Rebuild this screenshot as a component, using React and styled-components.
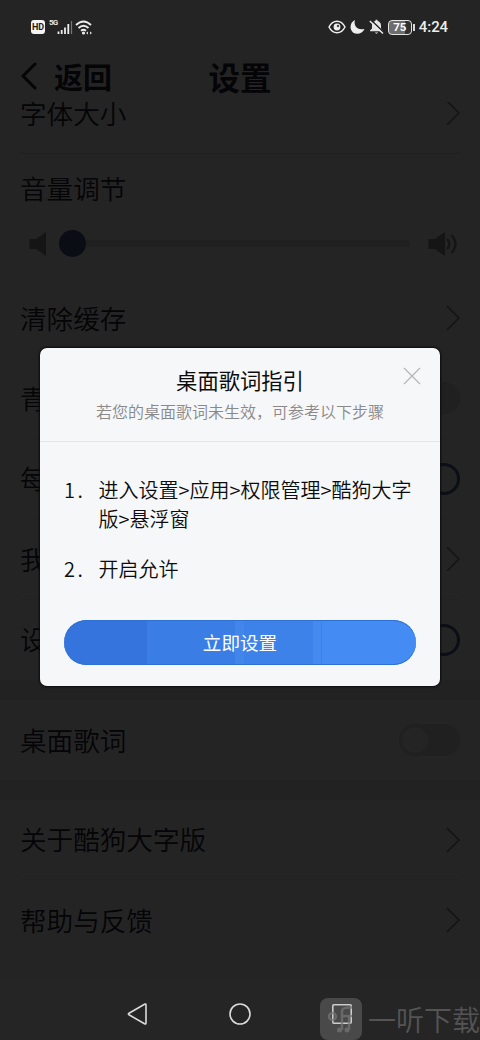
import styled, { createGlobalStyle } from 'styled-components';

const GlobalStyle = createGlobalStyle`
  * {
    box-sizing: border-box;
  }

  body {
    margin: 0;
    background: #242424;
    font-family: "Noto Sans CJK SC", sans-serif;
    font-weight: 350;
  }
`;

const Screen = styled.div`
  position: relative;
  display: flex;
  flex-direction: column;
  width: 480px;
  height: 1040px;
  overflow: hidden;
  background: #242424;
  color: #050507;
`;

const StatusBar = styled.div`
  display: flex;
  align-items: center;
  flex: none;
  height: 54px;
  padding: 0 32px 0 31px;
`;

const StatusGroup = styled.div`
  display: flex;
  align-items: center;
  margin-left: ${({ $end }) => ($end ? 'auto' : 0)};
`;

const HdBadge = styled.span`
  width: 14px;
  height: 14px;
  border-radius: 3px;
  background: #f4f4f4;
  color: #1c1c1c;
  font: bold 9px/14px Roboto, sans-serif;
  text-align: center;
`;

const Network = styled.span`
  align-self: flex-start;
  margin: -1px 0 0 4px;
  color: #e8e8e8;
  font: bold 8px/8px Roboto, sans-serif;
  letter-spacing: -0.8px;
`;

const Battery = styled.span`
  width: 24px;
  height: 15px;
  margin-left: 4px;
  border: 1.5px solid #e4e4e4;
  border-radius: 4px;
  background: linear-gradient(90deg, #6d6d6d 72%, #303030 72%);
  color: #fff;
  font: bold 11.5px/13px Roboto, sans-serif;
  text-align: center;
`;

const BatteryTip = styled.span`
  width: 2px;
  height: 7px;
  margin-left: 1px;
  background: #d8d8d8;
`;

const Clock = styled.span`
  margin-left: 4px;
  color: #ededed;
  font: 500 15px/20px Roboto, sans-serif;
  letter-spacing: -0.1px;
`;

const Header = styled.header`
  display: grid;
  grid-template-columns: 1fr auto 1fr;
  align-items: center;
  flex: none;
  height: 48px;
  padding: 0 20px 4px;
`;

const Back = styled.div`
  display: flex;
  align-items: center;
  gap: 17px;
  font-size: 29px;
  font-weight: 700;
  line-height: 40px;
`;

const Title = styled.h1`
  margin: 0;
  font-size: 31.5px;
  font-weight: 700;
  line-height: 40px;
`;

const List = styled.main`
  display: flex;
  flex-direction: column;
  justify-content: flex-end;
  flex: none;
  height: 858px;
  overflow: hidden;
`;

const Row = styled.div`
  display: flex;
  align-items: center;
  justify-content: space-between;
  flex: none;
  height: ${({ $height }) => $height || 80.3}px;
  margin: 0 20px;
  border-bottom: ${({ $line }) => ($line ? `1px solid ${$line}` : 'none')};
  font-size: 26.6px;
  line-height: 40px;
`;

const Label = styled.span`
  padding-bottom: 1px;
`;

const VolumeBlock = styled.section`
  flex: none;
  height: 125px;
  margin: 0 20px;
  padding-top: 14px;
  border-bottom: 1px solid #222;
  font-size: 26.6px;
  line-height: 40px;
`;

const VolumeLine = styled.div`
  display: flex;
  align-items: center;
  height: 28px;
  margin-top: 22px;
  padding: 0 3px 0 8px;
`;

const Knob = styled.span`
  width: 27px;
  height: 27px;
  margin-left: 12px;
  border-radius: 50%;
  background: #0b0d14;
`;

const Track = styled.span`
  flex: 1;
  height: 7px;
  margin-right: 17px;
  border-radius: 0 4px 4px 0;
  background: #202020;
`;

const Band = styled.div`
  flex: none;
  height: 20px;
  background: #222;
`;

const Toggle = styled.span`
  display: flex;
  width: 61px;
  height: 32px;
  padding: 3px;
  border-radius: 16px;
  background: ${({ $on }) => ($on ? '#0b0e15' : '#202020')};
  justify-content: ${({ $on }) => ($on ? 'flex-end' : 'flex-start')};

  &::before {
    content: "";
    width: 26px;
    height: 26px;
    border-radius: 50%;
    background: #242424;
  }
`;

const NavBar = styled.nav`
  display: flex;
  align-items: center;
  justify-content: space-between;
  flex: 1;
  margin-top: 20px;
  padding: 8px 127px 0 126px;
  background: #252525;
`;

const Overlay = styled.div`
  position: absolute;
  inset: 0;
  display: flex;
  align-items: flex-start;
  justify-content: center;
  padding-top: 347.5px;
`;

const Dialog = styled.section`
  width: 400px;
  height: 338px;
  border-radius: 7px;
  background: #f6f7f9;
  box-shadow: 0 0 2px 1px #0c0c0c;
  color: #0c0c0c;
`;

const DialogHead = styled.div`
  position: relative;
  height: 94px;
  padding-top: 16px;
  border-bottom: 1px solid #e3e4e6;
  text-align: center;
`;

const DialogTitle = styled.h2`
  margin: 0;
  font-size: 21.3px;
  font-weight: 400;
  line-height: 32px;
`;

const Subtitle = styled.p`
  margin: 2px 0 0;
  color: #89898a;
  font-size: 16px;
  line-height: 26px;
`;

const CloseIcon = styled.svg`
  position: absolute;
  top: 19px;
  right: 19px;
`;

const Steps = styled.ol`
  display: flex;
  flex-direction: column;
  gap: 21px;
  margin: 0;
  padding: 33px 24px 0;
  list-style: none;
  font-size: 20px;
  line-height: 29px;
`;

const Step = styled.li`
  display: flex;
`;

const StepNumber = styled.span`
  flex: none;
  width: 34.5px;
  letter-spacing: 2.5px;
`;

const SetupButton = styled.button`
  display: block;
  width: 352px;
  height: 45px;
  margin: 37.5px auto 0;
  padding: 0 0 1px;
  border: 0;
  border-radius: 23px;
  background: linear-gradient(
    90deg,
    #3474dc 83px,
    #397de5 83px 171px,
    #4286ea 171px 180px,
    #3d82e9 180px 249px,
    #448aef 249px 257px,
    #3d82e9 257px 258px,
    #448bf3 258px
  );
  box-shadow: inset 0 1px #2d70d8, inset 0 -1px #2d70d8;
  color: #fff;
  font-family: inherit;
  font-size: 18.6px;
  line-height: 44px;
`;

const Watermark = styled.div`
  position: absolute;
  left: 320px;
  bottom: 0;
  display: flex;
  align-items: center;
  gap: 6px;
  height: 42px;
  color: #545454;
  font-size: 28px;
  line-height: 40px;
  white-space: nowrap;
`;

const Chevron = () => (
  <svg width="14" height="26" viewBox="0 0 14 26" fill="none" stroke="#131313" strokeWidth="1.5">
    <path d="M1 1L13 13L1 25" />
  </svg>
);

const Speaker = ({ loud }) => (
  <svg width={loud ? 30 : 19} height="26" viewBox={`0 0 ${loud ? 30 : 19} 26`} fill="#151515">
    <path d="M1.5 8H8L18 1V25L8 18H1.5Z" />
    {loud && (
      <path
        d="M20 8Q25 13 20 18M24.5 4Q32.5 13 24.5 22"
        fill="none"
        stroke="#151515"
        strokeWidth="2.2"
      />
    )}
  </svg>
);

const Signal = () => (
  <svg width="16" height="15" viewBox="0 0 16 15">
    <path d="M1.5 14V11.5M4.7 14V10M8 14V7.5M11.3 14V4" stroke="#eee" strokeWidth="1.8" />
    <path d="M14.5 14V1" stroke="#777" strokeWidth="1.2" />
  </svg>
);

const Wifi = () => (
  <svg width="18" height="15" viewBox="0 0 18 15" fill="none" stroke="#eee" strokeWidth="1.8" style={{ marginLeft: 2 }}>
    <path d="M1 5Q8.5-2 16 5M3.5 8Q8.5 3.5 13.5 8M6 10.7Q8.5 8.7 11 10.7" />
    <circle cx="8.5" cy="13" r=".7" fill="#eee" />
    <path d="M11 13L13 11.5V14.5ZM17 13L15 11.5V14.5Z" fill="#ddd" stroke="none" />
  </svg>
);

const Eye = () => (
  <svg width="18" height="16" viewBox="0 0 18 16" fill="none" stroke="#eee" strokeWidth="1.5">
    <path d="M1 8Q4 2.2 9 2.2T17 8Q14 13.8 9 13.8T1 8Z" />
    <circle cx="9" cy="8" r="3.4" fill="#eee" stroke="none" />
    <circle cx="10" cy="7" r="1.2" fill="#444" stroke="none" />
  </svg>
);

const Moon = () => (
  <svg width="15" height="16" viewBox="0 0 15 16" fill="#eee" style={{ marginLeft: 4 }}>
    <path d="M5 1C3.2 6.5 7.2 12 14.5 9.8C12 16.5 2.5 16.5 .8 10C-.1 6.3 1.5 2.6 5 1Z" />
  </svg>
);

const MutedBell = () => (
  <svg width="15" height="16" viewBox="0 0 15 16" style={{ marginLeft: 4 }}>
    <path
      d="M7.5 .8C8.4 .8 8.6 1.5 8.8 2C11 2.6 12 4.5 12 6.5V9.5L14 12.3H1V11.5L3 9.5V6.5C3 4.5 4 2.6 6.2 2C6.4 1.4 6.6 .8 7.5 .8ZM5.8 13.5H9.2Q7.5 15.8 5.8 13.5Z"
      fill="#e4e4e4"
    />
    <path d="M2.2 1.2L15 13.6" stroke="#242424" strokeWidth="1.6" />
    <path d="M.8 2L14 14.5" stroke="#eee" strokeWidth="1.4" />
  </svg>
);

const App = () => {
  return (
    <>
      <GlobalStyle />
      <Screen>
        <StatusBar>
          <StatusGroup>
            <HdBadge>HD</HdBadge>
            <Network>5G</Network>
            <Signal />
            <Wifi />
          </StatusGroup>
          <StatusGroup $end>
            <Eye />
            <Moon />
            <MutedBell />
            <Battery>75</Battery>
            <BatteryTip />
            <Clock>4:24</Clock>
          </StatusGroup>
        </StatusBar>

        <Header>
          <Back>
            <svg width="17" height="28" viewBox="0 0 17 28" fill="none" stroke="#050505" strokeWidth="3">
              <path d="M15 2L3 14L15 26" strokeLinecap="round" strokeLinejoin="round" />
            </svg>
            返回
          </Back>
          <Title>设置</Title>
        </Header>

        <List>
          <Row $height={80} $line="#1f1f1f"><Label>字体大小</Label><Chevron /></Row>
          <VolumeBlock>
            音量调节
            <VolumeLine>
              <Speaker />
              <Knob />
              <Track />
              <Speaker loud />
            </VolumeLine>
          </VolumeBlock>
          <Row $line="#222"><Label>清除缓存</Label><Chevron /></Row>
          <Row $line="#222"><Label>青</Label><Toggle /></Row>
          <Row $line="#222"><Label>每</Label><Toggle $on /></Row>
          <Row $line="#222"><Label>我</Label><Chevron /></Row>
          <Row><Label>设</Label><Toggle $on /></Row>
          <Band />
          <Row $height={80}><Label>桌面歌词</Label><Toggle /></Row>
          <Band />
          <Row $height={80} $line="#222"><Label>关于酷狗大字版</Label><Chevron /></Row>
          <Row $height={80}><Label>帮助与反馈</Label><Chevron /></Row>
        </List>

        <NavBar>
          <svg width="22" height="24" viewBox="0 0 22 24" fill="none" stroke="#dadada" strokeWidth="1.6">
            <path d="M3 11.2L18.5 2.2Q20 1.5 20 3V21Q20 22.5 18.5 21.8L3 12.8Q1.7 12 3 11.2Z" />
          </svg>
          <svg width="24" height="24" viewBox="0 0 24 24" fill="none" stroke="#dadada" strokeWidth="1.6">
            <circle cx="12" cy="12" r="10" />
          </svg>
          <svg width="22" height="24" viewBox="0 0 22 24" fill="none" stroke="#dadada" strokeWidth="1.6">
            <rect x="1.8" y="2.8" width="18.4" height="18.4" rx="1" />
          </svg>
        </NavBar>

        <Overlay>
          <Dialog>
            <DialogHead>
              <DialogTitle>桌面歌词指引</DialogTitle>
              <Subtitle>若您的桌面歌词未生效，可参考以下步骤</Subtitle>
              <CloseIcon width="18" height="18" viewBox="0 0 18 18" stroke="#b4b4b6" strokeWidth="1.1">
                <path d="M1 1L17 17M17 1L1 17" />
              </CloseIcon>
            </DialogHead>
            <Steps>
              <Step>
                <StepNumber>1.</StepNumber>
                <span>进入设置&gt;应用&gt;权限管理&gt;酷狗大字<br />版&gt;悬浮窗</span>
              </Step>
              <Step>
                <StepNumber>2.</StepNumber>
                <span>开启允许</span>
              </Step>
            </Steps>
            <SetupButton>立即设置</SetupButton>
          </Dialog>
        </Overlay>

        <Watermark>
          <svg width="42" height="42" viewBox="0 0 42 42" fill="none" stroke="#747474" strokeWidth="2.5">
            <rect width="42" height="42" rx="8" fill="#aaa" fillOpacity=".28" stroke="none" />
            <g opacity=".75">
              <circle cx="12.5" cy="18.5" r="3.5" />
              <path d="M32 9.5Q22 9 22 13V32M22 18H32M29 18V32" />
              <circle cx="19.5" cy="32" r="2.5" fill="#747474" stroke="none" />
              <circle cx="27" cy="32" r="2.5" fill="#747474" stroke="none" />
            </g>
          </svg>
          一听下载
        </Watermark>
      </Screen>
    </>
  );
};

export default App;
